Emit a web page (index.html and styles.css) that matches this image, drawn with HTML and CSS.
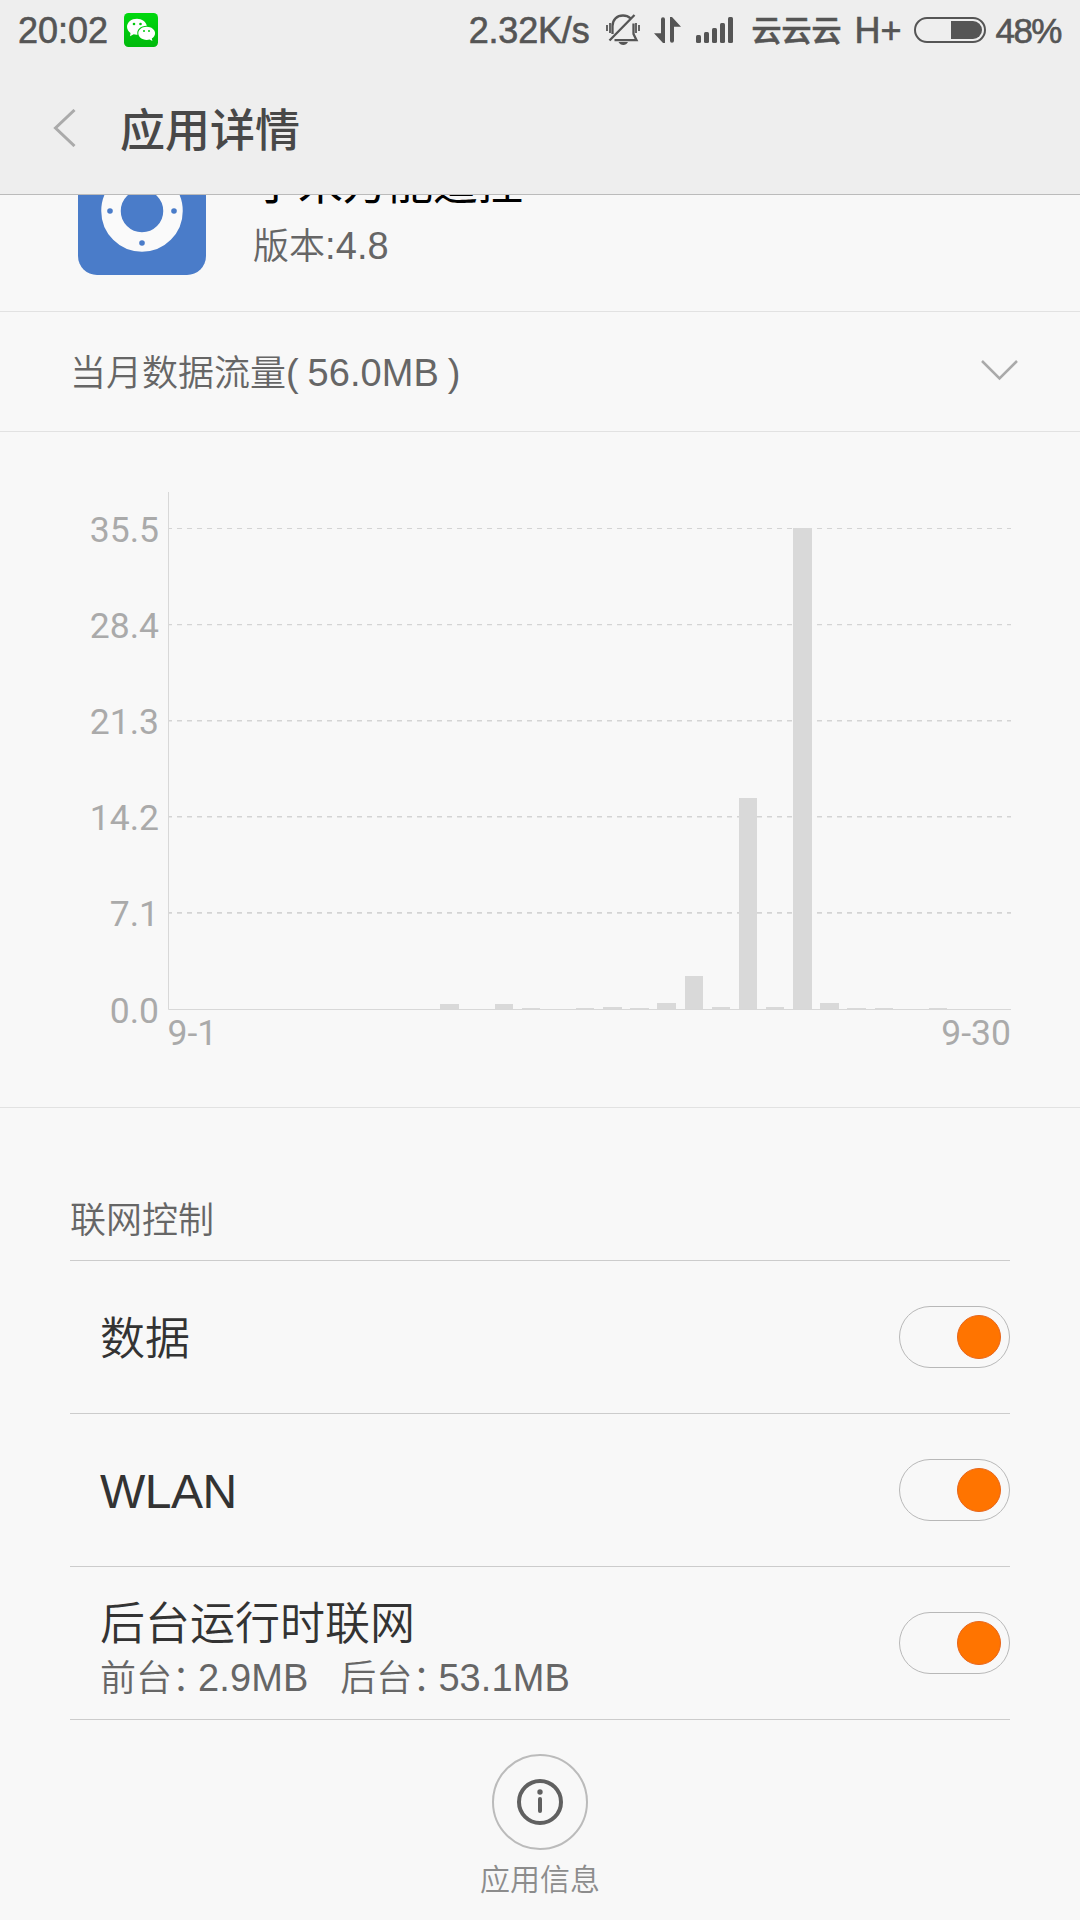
FILE: index.html
```html
<!DOCTYPE html>
<html lang="zh-CN">
<head>
  <meta charset="utf-8">
  <title>应用详情</title>
  <link rel="stylesheet" href="styles.css">
</head>
<body>
  <header class="header">
    <div class="status">
      <span class="clock">20:02</span>
      <svg class="wechat" width="34" height="34" viewBox="0 0 34 34">
        <defs>
          <linearGradient id="green" x1="0" y1="0" x2="0" y2="1">
            <stop offset="0" stop-color="#00d80e"/>
            <stop offset="1" stop-color="#00b90c"/>
          </linearGradient>
        </defs>
        <rect width="34" height="34" rx="4.5" fill="url(#green)"/>
        <path fill="#fff" d="M13 5.700C7.400 5.700 3 9.200 3 13.800c0 2.600 1.400 4.800 3.500 6.300L6 23.200l3.700-1.900c1.200.4 2.400.5 3.800.4-1.200-5 2.800-9 9.300-9C22 8.600 18 5.700 13 5.700z"/>
        <path fill="#fff" d="M22.700 13.700c-4.800 0-8.400 2.900-8.400 6.600s3.600 6.600 8.400 6.600c1 0 2-.1 2.900-.4l2.800 1.500-.6-2.500c2-1.200 3.300-3.100 3.300-5.200 0-3.700-3.700-6.600-8.400-6.600z"/>
        <g fill="#00c80d">
          <circle cx="10" cy="11" r="1.300"/><circle cx="16.500" cy="11" r="1.300"/>
          <circle cx="20" cy="18" r="1"/><circle cx="25" cy="18" r="1"/>
        </g>
      </svg>
      <span class="speed">2.32K/s</span>
      <svg class="bell" width="34" height="32" viewBox="0 0 34 32" fill="none" stroke="#555" stroke-width="2.300">
        <path d="M6.500 20V12C6.500 5.500 11 1.500 17 1.500c3 0 5.500 1 7.300 2.700M27.500 9.500V20l3 6.200H8.500M3.500 26.500L28.500 1"/>
        <path d="M1 11v6M4 9v10M30 9v10M33 11v6" stroke-width="1.800"/>
        <path fill="#555" stroke="none" d="M12.500 28h9.500c-1 2-2.700 3-4.700 3s-3.800-1-4.800-3z"/>
      </svg>
      <svg class="arrows" width="27" height="26" viewBox="0 0 27 26" fill="#555">
        <path d="M7 2.200a2 2 0 0 1 4 0V26H9L0 16.200h7zM16 0h2l9 9.800h-7v14a2 2 0 0 1-4 0z"/>
      </svg>
      <svg class="signal" width="37" height="26" viewBox="0 0 37 26" fill="#555">
        <rect y="18" width="5" height="8" rx="1.500"/>
        <rect x="8" y="15" width="5" height="11" rx="1.500"/>
        <rect x="16" y="11" width="5" height="15" rx="1.500"/>
        <rect x="24" y="6" width="5" height="20" rx="1.500"/>
        <rect x="32" width="5" height="26" rx="1.500"/>
      </svg>
      <span class="carrier">云云云</span>
      <span class="network">H+</span>
      <svg class="battery" width="72" height="26" viewBox="0 0 72 26">
        <rect x="1" y="1" width="70" height="24" rx="12" fill="none" stroke="#555" stroke-width="2"/>
        <path d="M37 4h22a9 9 0 0 1 0 18H37z" fill="#555"/>
      </svg>
      <span class="percent">48%</span>
    </div>
    <div class="titlebar">
      <svg width="23" height="38" viewBox="0 0 23 38" fill="none" stroke="#aaa" stroke-width="3">
        <path d="M21.500 1L2.500 19l19 18"/>
      </svg>
      <h1>应用详情</h1>
    </div>
  </header>

  <section class="app">
    <svg class="app-icon" width="128" height="128" viewBox="0 0 128 128">
      <rect width="128" height="128" rx="19" fill="#4a7cc9"/>
      <circle cx="64" cy="64" r="31" fill="none" stroke="#fafafa" stroke-width="19.500"/>
      <g fill="#4a7cc9">
        <circle cx="32" cy="64" r="2.800"/><circle cx="96" cy="64" r="2.800"/>
        <circle cx="64" cy="32" r="2.800"/><circle cx="64" cy="96" r="2.800"/>
      </g>
    </svg>
    <div>
      <div class="app-name">小米万能遥控</div>
      <div class="version">版本<span class="num">:4.8</span></div>
    </div>
  </section>

  <section class="traffic">
    <div>当月数据流量<span class="num">( 56.0MB )</span></div>
    <svg width="37" height="21" viewBox="0 0 37 21" fill="none" stroke="#aaa" stroke-width="2.500">
      <path d="M1 1l17.500 17.500L36 1"/>
    </svg>
  </section>

  <section class="chart">
    <svg id="chart" width="1080" height="675" viewBox="0 0 1080 675">
      <path class="axis" d="M168.500 60v517.500H1011"/>
    </svg>
  </section>

  <section class="control">
    <h2>联网控制</h2>
    <div class="row">
      <div class="name">数据</div>
      <div class="switch"></div>
    </div>
    <div class="row">
      <div class="name latin">WLAN</div>
      <div class="switch"></div>
    </div>
    <div class="row">
      <div class="detail">
        <div class="name">后台运行时联网</div>
        <div class="usage">
          <span>前台<i>：</i><span class="num">2.9MB</span></span>
          <span>后台<i>：</i><span class="num">53.1MB</span></span>
        </div>
      </div>
      <div class="switch"></div>
    </div>
  </section>

  <footer class="info">
    <svg width="96" height="96" viewBox="0 0 96 96" fill="none">
      <circle cx="48" cy="48" r="47" stroke="#bbb" stroke-width="2"/>
      <circle cx="48" cy="48" r="21" stroke="#606060" stroke-width="4"/>
      <circle cx="48" cy="38" r="2.700" fill="#606060"/>
      <path d="M48 45v12" stroke="#606060" stroke-width="4" stroke-linecap="round"/>
    </svg>
    <div>应用信息</div>
  </footer>

  <script>
    var chart = document.querySelector('#chart');
    var left = 168.7, base = 577, step = 27.15;
    var max = 35.5, height = 481;
    // slot on the x axis -> MB
    var usage = {
      10: 0.37, 12: 0.37, 13: 0.08, 15: 0.08, 16: 0.15, 17: 0.08, 18: 0.44,
      19: 2.44, 20: 0.15, 21: 15.57, 22: 0.15, 23: 35.5, 24: 0.44, 25: 0.08,
      26: 0.08, 28: 0.08
    };

    function add(name, attrs, text) {
      var el = document.createElementNS('http://www.w3.org/2000/svg', name);
      for (var key in attrs) el.setAttribute(key, attrs[key]);
      if (text) el.textContent = text;
      chart.appendChild(el);
    }

    for (var i = 0; i <= 5; i++) {
      var y = Math.floor(base - height * i / 5);
      // the lines get a little thicker towards the bottom
      var w = 1 + (5 - i) * 0.2;
      if (i) add('path', { 'class': 'grid', d: 'M169 ' + (y + w / 2) + 'H1011', 'stroke-width': w });
      add('text', { 'class': 'tick end', x: 159, y: y + 13.5 }, (max * i / 5).toFixed(1));
    }
    for (var slot in usage) {
      var h = Math.round(usage[slot] / max * height);
      add('rect', { 'class': 'bar', x: left + slot * step, y: base - h, width: 18.4, height: h });
    }
    add('text', { 'class': 'tick', x: 167.5, y: 613 }, '9-1');
    add('text', { 'class': 'tick end', x: 1011, y: 613 }, '9-30');
  </script>
</body>
</html>
```
FILE: styles.css
```css
* {
  box-sizing: border-box;
}
body {
  margin: 0;
  background: #f8f8f8;
  color: #666;
  font-family: "Liberation Sans", "Noto Sans CJK SC", sans-serif;
  font-size: 36px;
  font-weight: 350;
}
svg {
  display: block;
  flex: none;
}
h1, h2 {
  margin: 0;
}
.num {
  font-size: 38px;
  letter-spacing: 0.1px;
  word-spacing: -2px;
}

.header {
  height: 195px;
  background: #eee;
  border-bottom: 1px solid #bbb;
}
.status {
  display: flex;
  align-items: center;
  height: 60px;
  padding: 0 19px 0 18px;
  color: #555;
  line-height: 60px;
  white-space: nowrap;
  -webkit-text-stroke: 0.6px #555;
}
.status span {
  padding-top: 2px;
}
.wechat {
  margin-left: 16px;
}
.speed {
  margin-left: auto;
  letter-spacing: -0.2px;
}
.bell {
  margin-left: 17px;
}
.arrows {
  margin-left: 14px;
}
.signal {
  margin-left: 15px;
}
.carrier {
  margin-left: 18px;
  font-size: 30px;
  font-weight: 500;
}
.network {
  margin-left: 13px;
  width: 49px;
}
.battery {
  margin-left: 11px;
}
.percent {
  margin-left: 9px;
  font-size: 35px;
  letter-spacing: -1.5px;
}
.titlebar {
  display: flex;
  align-items: center;
  height: 134px;
  padding: 2px 0 0 53px;
}
.titlebar h1 {
  margin: -2px 0 0 44px;
  color: #484848;
  font-size: 45px;
  font-weight: 500;
}

.app {
  display: flex;
  align-items: flex-end;
  height: 117px;
  padding: 0 0 36px 78px;
  border-bottom: 1px solid #e2e2e2;
  overflow: hidden;
}
.app-icon {
  margin-right: 47px;
}
.app-name {
  margin-bottom: 5px;
  color: #000;
  font-size: 45px;
  font-weight: 400;
  line-height: 56px;
}
.version {
  line-height: 56px;
}

.traffic {
  display: flex;
  align-items: center;
  justify-content: space-between;
  height: 120px;
  padding: 0 62px 3px 70px;
  border-bottom: 1px solid #e2e2e2;
}

.chart {
  height: 676px;
  border-bottom: 1px solid #e2e2e2;
}
.axis {
  fill: none;
  stroke: #d8d8d8;
}
.grid {
  stroke: #d4d4d4;
  stroke-dasharray: 5;
  stroke-dashoffset: 2;
}
.bar {
  fill: #d9d9d9;
  shape-rendering: crispEdges;
}
.tick {
  fill: #aaa;
  font-family: Roboto, sans-serif;
  font-size: 35.5px;
  font-weight: 400;
}
.end {
  text-anchor: end;
}

.control {
  padding: 0 70px;
}
.control h2 {
  height: 153px;
  padding-top: 84px;
  border-bottom: 1px solid #ccc;
  font-size: 36px;
  font-weight: 350;
  line-height: 58px;
}
.row {
  display: flex;
  align-items: center;
  justify-content: space-between;
  height: 153px;
  padding-left: 30px;
  border-bottom: 1px solid #ccc;
}
.detail {
  padding-top: 8px;
}
.name {
  padding-top: 6px;
  color: #333;
  font-size: 45px;
  line-height: 56px;
}
.latin {
  padding-top: 4px;
  font-size: 48px;
  letter-spacing: -0.5px;
}
.usage {
  display: flex;
  gap: 32px;
  line-height: 50px;
}
.usage i {
  letter-spacing: -10px;
  font-style: normal;
}
.switch {
  display: flex;
  align-items: center;
  justify-content: flex-end;
  width: 111px;
  height: 62px;
  padding-right: 8px;
  border: 1px solid #b8b8b8;
  border-radius: 31px;
}
.switch::after {
  content: "";
  width: 42px;
  height: 42px;
  border: 1px solid #e8651a;
  border-radius: 50%;
  background: #ff7400;
}

.info {
  display: flex;
  flex-direction: column;
  align-items: center;
  padding-top: 34px;
  color: #8c8c8c;
  font-size: 30px;
  line-height: 60px;
}
```
